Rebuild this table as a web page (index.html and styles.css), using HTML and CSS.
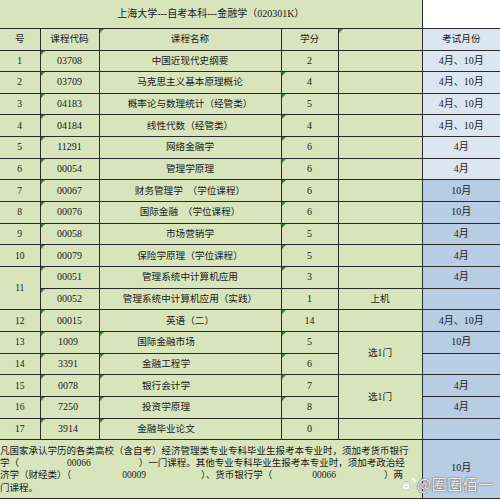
FILE: index.html
```html
<!DOCTYPE html>
<html lang="zh-CN">
<head>
<meta charset="utf-8">
<title>上海大学 自考本科 金融学</title>
<link rel="stylesheet" href="styles.css">
</head>
<body>
<div class="page">
<table class="plan">
  <colgroup>
    <col class="c-no"><col class="c-code"><col class="c-name"><col class="c-credit"><col class="c-note"><col class="c-month">
  </colgroup>
  <tr class="r-title">
    <td colspan="5" class="g title">上海大学---自考本科---金融学（020301K）</td>
    <td class="blankw"></td>
  </tr>
  <tr class="r-head">
    <td class="g">号</td>
    <td class="g">课程代码</td>
    <td class="g tri">课程名称</td>
    <td class="g">学分</td>
    <td class="g tri"></td>
    <td class="lb">考试月份</td>
  </tr>
  <tr class="r"><td class="g">1</td><td class="g tri num">03708</td><td class="g">中国近现代史纲要</td><td class="g num">2</td><td class="g"></td><td class="lb num">4月、10月</td></tr>
  <tr class="r"><td class="g">2</td><td class="g tri num">03709</td><td class="g">马克思主义基本原理概论</td><td class="g tri num">4</td><td class="g"></td><td class="lb num">4月、10月</td></tr>
  <tr class="r"><td class="g">3</td><td class="g tri num">04183</td><td class="g">概率论与数理统计（经管类）</td><td class="g tri num">5</td><td class="g"></td><td class="lb num">4月、10月</td></tr>
  <tr class="r"><td class="g">4</td><td class="g tri num">04184</td><td class="g">线性代数（经管类）</td><td class="g tri num">4</td><td class="g"></td><td class="lb num">4月、10月</td></tr>
  <tr class="r"><td class="g">5</td><td class="g tri num">11291</td><td class="g">网络金融学</td><td class="g tri num">6</td><td class="g"></td><td class="lb num">4月</td></tr>
  <tr class="r"><td class="g">6</td><td class="g tri num">00054</td><td class="g">管理学原理</td><td class="g tri num">6</td><td class="g"></td><td class="lb num">4月</td></tr>
  <tr class="r"><td class="g">7</td><td class="g tri num">00067</td><td class="g">财务管理学　（学位课程）</td><td class="g tri num">6</td><td class="g"></td><td class="db num">10月</td></tr>
  <tr class="r"><td class="g">8</td><td class="g tri num">00076</td><td class="g">国际金融　（学位课程）</td><td class="g tri num">6</td><td class="g"></td><td class="db num">10月</td></tr>
  <tr class="r"><td class="g">9</td><td class="g tri num">00058</td><td class="g">市场营销学</td><td class="g tri num">5</td><td class="g"></td><td class="db num">4月</td></tr>
  <tr class="r"><td class="g">10</td><td class="g tri num">00079</td><td class="g">保险学原理（学位课程）</td><td class="g tri num">5</td><td class="g"></td><td class="db num">4月</td></tr>
  <tr class="r"><td class="g" rowspan="2">11</td><td class="g tri num">00051</td><td class="g">管理系统中计算机应用</td><td class="g tri num">3</td><td class="g"></td><td class="db num">4月</td></tr>
  <tr class="r"><td class="g tri num">00052</td><td class="g">管理系统中计算机应用（实践）</td><td class="g num">1</td><td class="g">上机</td><td class="db"></td></tr>
  <tr class="r"><td class="g">12</td><td class="g tri num">00015</td><td class="g">英语（二）</td><td class="g tri num">14</td><td class="g"></td><td class="db num">4月、10月</td></tr>
  <tr class="r"><td class="g">13</td><td class="g tri num cut">1009</td><td class="g tri shift">国际金融市场</td><td class="g tri num">5</td><td class="g" rowspan="2">选1门</td><td class="db num">10月</td></tr>
  <tr class="r"><td class="g">14</td><td class="g tri num cut">3391</td><td class="g tri shift">金融工程学</td><td class="g tri num">6</td><td class="db"></td></tr>
  <tr class="r"><td class="g">15</td><td class="g tri num cut">0078</td><td class="g tri shift">银行会计学</td><td class="g tri num">7</td><td class="g" rowspan="2">选1门</td><td class="db num">4月</td></tr>
  <tr class="r"><td class="g">16</td><td class="g tri num cut">7250</td><td class="g tri shift">投资学原理</td><td class="g tri num">8</td><td class="db num">4月</td></tr>
  <tr class="r"><td class="g">17</td><td class="g tri num cut">3914</td><td class="g tri shift">金融毕业论文</td><td class="g num">0</td><td class="g"></td><td class="db"></td></tr>
  <tr class="r-notes">
    <td colspan="5" class="g notes">
      <div class="line">凡国家承认学历的各类高校（含自考）经济管理类专业专科毕业生报考本专业时，须加考货币银行</div>
      <div class="line">学（<span class="gap w48"></span>00066<span class="gap w48"></span>）一门课程。其他专业专科毕业生报考本专业时，须加考政治经</div>
      <div class="line">济学（财经类）（<span class="gap w51"></span>00009<span class="gap w55"></span>）、货币银行学（<span class="gap w40"></span>00066<span class="gap w48"></span>）两</div>
      <div class="line">门课程。</div>
    </td>
    <td class="db num month-note">10月</td>
  </tr>
</table>
<div class="watermark">
  <svg class="wb" width="16" height="16" viewBox="0 0 16 16" aria-hidden="true">
    <ellipse cx="7" cy="10" rx="6.2" ry="4.6" fill="none" stroke="#ffffff" stroke-width="1.6"/>
    <ellipse cx="7" cy="10" rx="6.2" ry="4.6" fill="none" stroke="#8a8a8a" stroke-width="0.6"/>
    <circle cx="6.3" cy="10.6" r="2.1" fill="none" stroke="#ffffff" stroke-width="1.4"/>
    <path d="M11.5 2.5 a4 4 0 0 1 3.6 4" fill="none" stroke="#ffffff" stroke-width="1.4"/>
  </svg>
  <span class="wm-text">@圈圈佰一</span>
</div>
</div>
</body>
</html>
```

FILE: styles.css
```css
html, body {
  margin: 0;
  padding: 0;
  background: #ffffff;
}

.page {
  position: relative;
  width: 500px;
  height: 501px;
  overflow: hidden;
}

.plan {
  width: 500px;
  border-collapse: collapse;
  table-layout: fixed;
  font-family: "Liberation Serif", "Noto Sans CJK SC", serif;
  font-size: 9.6px;
  color: #1a1a1a;
}

.c-no { width: 40px; }
.c-code { width: 59px; }
.c-name { width: 182px; }
.c-credit { width: 57px; }
.c-note { width: 84px; }
.c-month { width: 78px; }

.plan td {
  border: 1px solid #2b2b2b;
  text-align: center;
  vertical-align: middle;
  padding: 0;
  white-space: nowrap;
  overflow: hidden;
  position: relative;
  line-height: 12px;
}

.plan tr > td:first-child {
  border-left: none;
}

.plan tr > td:last-child {
  border-right: none;
}

.r-title { height: 28px; }
.r-head { height: 22px; }
.r { height: 21.67px; }
.r-notes { height: 59px; }

.plan tr:first-child td {
  border-top: none;
}

.g { background: #d8e4bc; }
.lb { background: #dce6f1; }
.db { background: #b8cce4; }
.blankw { background: #ffffff; }

.title {
  font-size: 10px;
}

.num {
  font-size: 10px;
}

.cut {
  text-align: left;
  padding-left: 0;
  text-indent: -3px;
}

.shift {
  padding-right: 48px !important;
}

.tri::before {
  content: "";
  position: absolute;
  top: 0;
  left: 0;
  border-top: 4px solid #3d8b2f;
  border-right: 4px solid transparent;
}

.notes {
  text-align: left !important;
  font-size: 9.5px;
  font-family: "Liberation Serif", "Noto Sans CJK SC", serif;
}

.notes .line {
  line-height: 12.4px;
  height: 12.4px;
  white-space: nowrap;
}

.month-note {
  line-height: 10px !important;
  padding-bottom: 2px !important;
}

.gap {
  display: inline-block;
}

.w40 { width: 40px; }
.w48 { width: 48px; }
.w51 { width: 51px; }
.w55 { width: 55px; }

.watermark {
  position: absolute;
  left: 400px;
  top: 476px;
  display: flex;
  align-items: center;
  gap: 1px;
}

.wm-text {
  font-family: "Noto Sans CJK SC", sans-serif;
  font-size: 15px;
  line-height: 16px;
  color: rgba(255, 255, 255, 0.9);
  text-shadow: 0 0 1px #6e6e6e, 0 0 1px #6e6e6e, 0 0 2px #8a8a8a;
  letter-spacing: 0.5px;
}
```
